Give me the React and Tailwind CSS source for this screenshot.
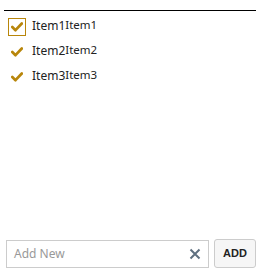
import React from 'react'

function Check() {
  return (
    <svg width="12" height="10" viewBox="0 0 12 10" className="block">
      <path d="M1.3 5 L4.5 8.2 L10.8 1.5" fill="none" stroke="#b8860b" strokeWidth="2.7" strokeLinecap="round" strokeLinejoin="round" />
    </svg>
  )
}

const items = [
  { label: 'Item1', focused: true },
  { label: 'Item2', focused: false },
  { label: 'Item3', focused: false },
]

export default function App() {
  return (
    <div className="w-[261px] h-[276px] bg-white flex flex-col" style={{ fontFamily: '"Segoe UI", "Noto Sans", sans-serif' }}>
      <div className="mt-[10px] ml-[4px] mr-[5px] border-t border-black" />
      <ul className="mt-[3px]">
        {items.map((it) => (
          <li key={it.label} className="h-[25px] flex items-center">
            <div className={`ml-[8px] w-[18px] h-[18px] flex items-center justify-center ${it.focused ? 'border border-[#b8860b]' : 'border border-transparent'}`}>
              <Check />
            </div>
            <span className="relative -top-[1px] ml-[6px] text-[12px] text-[#222]">
              {it.label}
              <span className="relative -top-[1px] text-[11.5px]">{it.label}</span>
            </span>
          </li>
        ))}
      </ul>
      <div className="mt-auto mb-[8px] ml-[6px] mr-[5px] flex items-end gap-[5px]">
        <div className="flex-1 h-[28px] border border-[#ccc] flex items-center">
          <span className="ml-[7px] text-[12px] text-[#999] flex-1">Add New</span>
          <svg width="12" height="12" viewBox="0 0 12 12" className="mr-[7px]">
            <path d="M1.5 1.5 L10.5 10.5 M10.5 1.5 L1.5 10.5" stroke="#5f7080" strokeWidth="2" />
          </svg>
        </div>
        <button className="w-[42px] h-[29px] border border-[#ccc] rounded-[3px] bg-[#f6f6f6] text-[11px] font-bold text-[#222]" style={{ fontFamily: '"Liberation Sans", Arial, sans-serif' }}>
          ADD
        </button>
      </div>
    </div>
  )
}
